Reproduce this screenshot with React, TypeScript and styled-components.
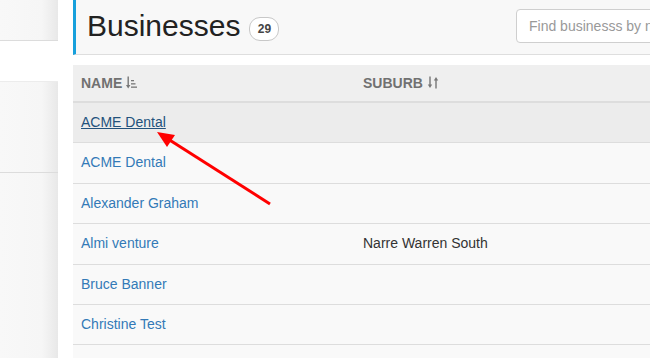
import React from 'react';
import styled, { createGlobalStyle } from 'styled-components';

const GlobalStyle = createGlobalStyle`
  html, body {
    margin: 0;
    padding: 0;
    background: #fff;
    overflow: hidden;
  }
  body {
    font-family: "Liberation Sans", Arial, sans-serif;
    font-size: 14px;
    color: #333;
  }
`;

const Page = styled.div`
  position: relative;
  display: flex;
  gap: 15px;
  width: 800px;
  height: 358px;
  overflow: hidden;
`;

const Sidebar = styled.aside`
  width: 58px;
  flex-shrink: 0;
  display: flex;
  flex-direction: column;
  gap: 40px;
`;

const SideCard = styled.div<{ $grow?: boolean }>`
  background: linear-gradient(to right, #f8f8f8 0%, #f6f6f6 72%, #e8e8e8 100%);
  border-top: 1px solid ${({ $grow }) => ($grow ? '#ececec' : 'transparent')};
  flex: ${({ $grow }) => ($grow ? 1 : '0 0 auto')};
  display: flex;
  flex-direction: column;
`;

const SideItem = styled.div<{ $h: number }>`
  height: ${({ $h }) => $h}px;
  flex-shrink: 0;
  border-bottom: 1px solid #dcdcdc;
`;

const Main = styled.main`
  width: 708px;
  flex-shrink: 0;
  display: flex;
  flex-direction: column;
  gap: 10px;
`;

const Header = styled.header`
  height: 54px;
  flex-shrink: 0;
  background: #f8f8f8;
  border-left: 3px solid #17a0dc;
  border-bottom: 1px solid #dedede;
  display: flex;
  align-items: center;
  padding: 0 15px 0 11px;
`;

const Title = styled.h1`
  margin: 0;
  font-size: 30px;
  font-weight: 400;
  color: #222;
  display: flex;
  align-items: center;
  gap: 9px;
  line-height: 1;
  position: relative;
  top: -1px;
`;

const Badge = styled.span`
  display: inline-flex;
  align-items: center;
  justify-content: center;
  width: 28px;
  height: 22px;
  border: 1px solid #c8c8c8;
  border-radius: 11px;
  background: #fff;
  font-size: 12px;
  font-weight: 700;
  color: #444;
  position: relative;
  top: 3px;
`;

const Search = styled.input`
  margin-left: auto;
  width: 250px;
  height: 34px;
  box-sizing: border-box;
  border: 1px solid #cfcfcf;
  border-radius: 4px;
  padding: 6px 12px;
  font-family: "Liberation Sans", Arial, sans-serif;
  font-size: 14px;
  color: #555;
  background: #fff;
  position: relative;
  top: -1px;

  &::placeholder {
    color: #999;
  }
`;

const Table = styled.table`
  width: 100%;
  flex-shrink: 0;
  border-collapse: collapse;
`;

const Th = styled.th<{ $w?: number }>`
  width: ${({ $w }) => ($w ? `${$w}px` : 'auto')};
  text-align: left;
  background: #efefef;
  border-bottom: 2px solid #dddddd;
  padding: 8px 8px;
  line-height: 20px;
  font-size: 14px;
  font-weight: 700;
  color: #717171;
  white-space: nowrap;
`;

const SortIcon = styled.svg`
  margin-left: 4px;
  vertical-align: -1px;
`;

const Tr = styled.tr<{ $active?: boolean }>`
  background: ${({ $active }) => ($active ? '#ececec' : '#f9f9f9')};
`;

const Td = styled.td`
  padding: 10px 8px;
  height: 19.4px;
  line-height: 19.4px;
  border-bottom: 1px solid #dddddd;
  color: #333;
  font-size: 14px;
`;

const Link = styled.a<{ $active?: boolean }>`
  color: ${({ $active }) => ($active ? '#23527c' : '#337ab7')};
  text-decoration: ${({ $active }) => ($active ? 'underline' : 'none')};
  cursor: pointer;
`;

const Overlay = styled.svg`
  position: absolute;
  left: 0;
  top: 0;
  pointer-events: none;
`;

const rows = [
  { name: 'ACME Dental', suburb: '', active: true },
  { name: 'ACME Dental', suburb: '' },
  { name: 'Alexander Graham', suburb: '' },
  { name: 'Almi venture', suburb: 'Narre Warren South' },
  { name: 'Bruce Banner', suburb: '' },
  { name: 'Christine Test', suburb: '' },
  { name: '', suburb: '' },
];

const SortAmountIcon = () => (
  <SortIcon width="11" height="13" viewBox="0 0 11 13">
    <g fill="#777">
      <rect x="1.5" y="0.5" width="1.4" height="9.5" />
      <path d="M0 9 L4.4 9 L2.2 12.5 Z" />
      <rect x="5" y="4" width="3" height="1.3" />
      <rect x="5" y="7.2" width="4.5" height="1.3" />
      <rect x="5" y="10.5" width="6" height="1.3" />
    </g>
  </SortIcon>
);

const SortBothIcon = () => (
  <SortIcon width="12" height="13" viewBox="0 0 12 13">
    <g fill="#777">
      <rect x="2.3" y="0.5" width="1.4" height="9" />
      <path d="M0.8 8.5 L5.2 8.5 L3 12 Z" />
      <rect x="8.3" y="3.5" width="1.4" height="9" />
      <path d="M6.8 4.5 L11.2 4.5 L9 1 Z" />
    </g>
  </SortIcon>
);

export default function App() {
  return (
    <>
      <GlobalStyle />
      <Page>
        <Sidebar>
          <SideCard>
            <SideItem $h={39} />
          </SideCard>
          <SideCard $grow>
            <SideItem $h={90} />
          </SideCard>
        </Sidebar>
        <Main>
          <Header>
            <Title>
              Businesses
              <Badge>29</Badge>
            </Title>
            <Search placeholder="Find businesss by name" />
          </Header>
          <Table>
            <thead>
              <tr>
                <Th $w={266}>
                  NAME
                  <SortAmountIcon />
                </Th>
                <Th>
                  SUBURB
                  <SortBothIcon />
                </Th>
              </tr>
            </thead>
            <tbody>
              {rows.map((r, i) => (
                <Tr key={i} $active={r.active}>
                  <Td>
                    {r.name && <Link $active={r.active}>{r.name}</Link>}
                  </Td>
                  <Td>{r.suburb}</Td>
                </Tr>
              ))}
            </tbody>
          </Table>
        </Main>
        <Overlay width="650" height="358" viewBox="0 0 650 358">
          <line x1="270" y1="204" x2="168" y2="139" stroke="#ff0000" strokeWidth="3" />
          <path d="M157 132 L175 135 L167 147 Z" fill="#ff0000" />
        </Overlay>
      </Page>
    </>
  );
}
